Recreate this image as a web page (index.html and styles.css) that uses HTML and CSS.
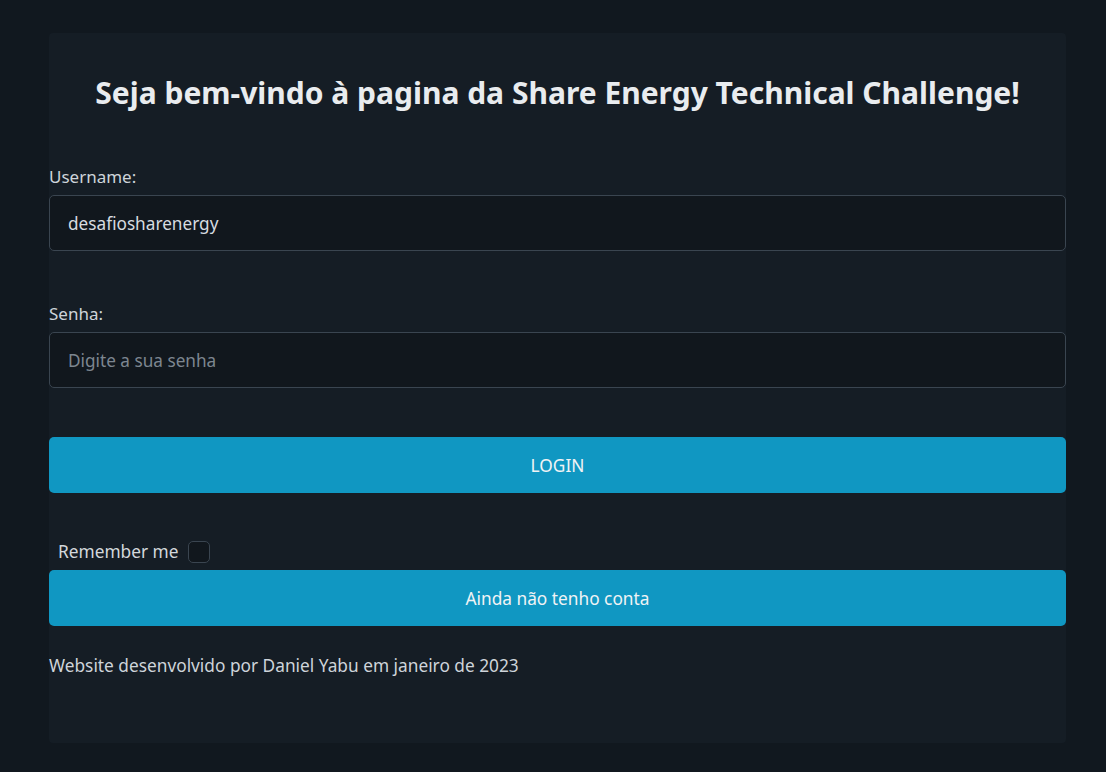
FILE: index.html
```html
<!DOCTYPE html>
<html lang="pt-BR">
<head>
<meta charset="utf-8">
<title>Share Energy</title>
<link rel="stylesheet" href="styles.css">
</head>
<body>
<main class="card">
  <h2 class="title">Seja bem-vindo à pagina da Share Energy Technical Challenge!</h2>
  <form class="form">
    <div class="field">
      <label class="label" for="user">Username:</label>
      <input class="input" id="user" type="text" value="desafiosharenergy">
    </div>
    <div class="field field-pass">
      <label class="label" for="pass">Senha:</label>
      <input class="input" id="pass" type="password" placeholder="Digite a sua senha">
    </div>
    <button class="btn btn-login" type="button">LOGIN</button>
    <div class="remember">
      <span class="remember-text">Remember me</span>
      <span class="check"></span>
    </div>
    <button class="btn btn-signup" type="button">Ainda não tenho conta</button>
  </form>
  <p class="footer">Website desenvolvido por Daniel Yabu em janeiro de 2023</p>
</main>
</body>
</html>
```

FILE: styles.css
```css
* { box-sizing: border-box; }
html, body { margin: 0; padding: 0; }
body {
  background: #11181f;
  font-family: "Noto Sans", "Open Sans", sans-serif;
  color: #dee2e6;
  font-size: 17.3px;
  line-height: 24px;
  min-height: 772px;
  padding-top: 33px;
}
.card {
  width: 1017px;
  margin-left: 49px;
  background: #151d25;
  border-radius: 4px;
  padding: 41px 0 65px;
}
.title {
  margin: 0;
  text-align: center;
  font-size: 30px;
  line-height: 37px;
  font-weight: 700;
  color: #e9ecef;
}
.form { display: flex; flex-direction: column; margin-top: 53px; }
.field { display: flex; flex-direction: column; }
.field-pass { margin-top: 50px; }
.label { color: #ced4da; margin-bottom: 7px; font-size: 17px; position: relative; top: 1px; }
.input {
  height: 56px;
  background: #11171d;
  border: 1px solid #3a4550;
  border-radius: 5px;
  padding: 0 18px;
  font-family: inherit;
  font-size: 17.2px;
  color: #d7dce0;
  outline: none;
}
.input::placeholder { color: #7d8690; }
.btn {
  height: 56px;
  border: none;
  border-radius: 5px;
  background: #1097c2;
  color: #f0f3f5;
  font-family: inherit;
  font-size: 17.3px;
}
.btn-login { margin-top: 49px; }
.remember {
  margin-top: 47px;
  height: 24px;
  display: flex;
  align-items: center;
  padding-left: 9px;
  gap: 10px;
}
.remember-text { color: #d3d8dc; }
.check {
  width: 22px;
  height: 22px;
  border: 1px solid #3a4550;
  border-radius: 5px;
  background: #11171d;
}
.btn-signup { margin-top: 6px; }
.footer { margin: 28px 0 0; color: #ced4da; }
```
